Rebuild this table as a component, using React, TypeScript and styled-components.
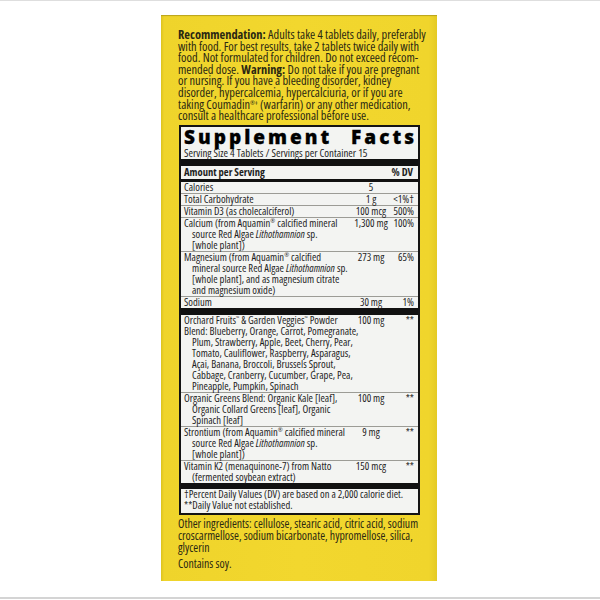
import React from "react";
import styled, { createGlobalStyle } from "styled-components";

const GlobalStyle = createGlobalStyle`
  html, body { margin: 0; padding: 0; background: #ffffff; }
  body { font-family: "Open Sans", "Liberation Sans", sans-serif; }
  * { box-sizing: border-box; }
`;

const COND = `"Open Sans", "Liberation Sans", sans-serif`;

const Page = styled.div`
  width: 600px;
  height: 600px;
  border-top: 1px solid #dedede;
  padding-top: 14px;
  display: flex;
  flex-direction: column;
  align-items: center;
  background: #ffffff;
`;

const Panel = styled.div`
  width: 276px;
  height: 566px;
  margin-left: -2px;
  background: linear-gradient(90deg, #dcc21f 0px, #efd42b 3px, #f2d72e 50%, #f0d52c 97%, #e4ca24 100%);
  box-shadow: inset 0 2px 1px -1px #b9a21d;
  padding: 14px 17px 0 17px;
  display: flex;
  flex-direction: column;
  color: #2a2812;
  font-family: ${COND};
  font-stretch: 75%;
`;

const Para = styled.p`
  margin: 0;
  font-size: 12.4px;
  line-height: 11.6px;
  white-space: nowrap;
`;

const Strong = styled.b`
  font-weight: 700;
`;

const Sup = styled.span<{ $s?: number }>`
  font-size: ${(p) => p.$s ?? 6}px;
  line-height: 0;
  vertical-align: baseline;
  position: relative;
  top: -4px;
`;

const FactsBox = styled.div`
  margin: 3px 0 0 1px;
  border: 2px solid #141414;
  background: #f3f4f2;
  padding: 0 4px 0 2px;
  color: #1e1e1e;
  font-size: 10.6px;
`;

const Title = styled.div`
  display: flex;
  justify-content: space-between;
  font-family: "Open Sans", "Liberation Sans", sans-serif;
  font-stretch: 100%;
  font-weight: 800;
  font-size: 19px;
  line-height: 20px;
  letter-spacing: 3px;
  -webkit-text-stroke: 0.3px #000;
  color: #000;
  padding: 0 0 0 1px;
  span:last-child { margin-right: -3px; }
`;

const Serving = styled.div`
  font-size: 10.9px;
  line-height: 11px;
  padding: 0 0 1px 1px;
  white-space: nowrap;
`;

const Bar = styled.div<{ $h: number }>`
  height: ${(p) => p.$h}px;
  background: #111;
  margin: 0 -4px 0 -2px;
`;

const HeadRow = styled.div`
  display: flex;
  justify-content: space-between;
  font-weight: 700;
  line-height: 13px;
  padding: 0 1px;
`;

const Row = styled.div<{ $last?: boolean }>`
  display: grid;
  grid-template-columns: minmax(0, 1fr) 40px 23px;
  line-height: 11px;
  border-bottom: ${(p) => (p.$last ? "none" : "1px solid #9c9c96")};
  margin: 0 -4px 0 -2px;
  padding: 0 4px 0 3px;
  white-space: nowrap;
`;

const Name = styled.div``;

const Amount = styled.div`
  text-align: center;
`;

const Dv = styled.div`
  text-align: right;
`;

const Cont = styled.div<{ $hang?: boolean }>`
  grid-column: 1 / -1;
  padding-left: 8px;
  text-indent: ${(p) => (p.$hang ? "-8px" : "0")};
`;

const Foot = styled.div`
  font-size: 10.6px;
  line-height: 11px;
  padding: 0 0 2px 1px;
  white-space: nowrap;
`;

const Other = styled.p`
  margin: 2px 0 0 0;
  font-size: 11.8px;
  line-height: 12px;
  white-space: nowrap;
`;

const Contains = styled.p`
  margin: 4px 0 0 0;
  font-size: 11.8px;
  line-height: 12px;
`;

const BottomLine = styled.div`
  width: 600px;
  height: 2px;
  margin-top: 16px;
  background: #d4d4d4;
`;

type R = {
  name: React.ReactNode;
  amount: string;
  dv: string;
  cont?: React.ReactNode[];
  hang?: boolean;
  last?: boolean;
};

const L = () => <i>Lithothamnion</i>;

const top: R[] = [
  { name: "Calories", amount: "5", dv: "" },
  { name: "Total Carbohydrate", amount: "1 g", dv: "<1%†" },
  { name: "Vitamin D3 (as cholecalciferol)", amount: "100 mcg", dv: "500%" },
  {
    name: <>Calcium (from Aquamin<Sup>®</Sup> calcified mineral</>,
    amount: "1,300 mg",
    dv: "100%",
    cont: [<>source Red Algae <L /> sp.</>, "[whole plant])"],
  },
  {
    name: <>Magnesium (from Aquamin<Sup>®</Sup> calcified</>,
    amount: "273 mg",
    dv: "65%",
    cont: [
      <>mineral source Red Algae <L /> sp.</>,
      "[whole plant], and as magnesium citrate",
      "and magnesium oxide)",
    ],
  },
  { name: "Sodium", amount: "30 mg", dv: "1%", last: true },
];

const bottom: R[] = [
  {
    name: <>Orchard Fruits<Sup $s={5}>™</Sup> &amp; Garden Veggies<Sup $s={5}>™</Sup> Powder</>,
    amount: "100 mg",
    dv: "**",
    hang: true,
    cont: [
      "Blend: Blueberry, Orange, Carrot, Pomegranate,",
      "Plum, Strawberry, Apple, Beet, Cherry, Pear,",
      "Tomato, Cauliflower, Raspberry, Asparagus,",
      "Açai, Banana, Broccoli, Brussels Sprout,",
      "Cabbage, Cranberry, Cucumber, Grape, Pea,",
      "Pineapple, Pumpkin, Spinach",
    ],
  },
  {
    name: "Organic Greens Blend: Organic Kale [leaf],",
    amount: "100 mg",
    dv: "**",
    cont: ["Organic Collard Greens [leaf], Organic", "Spinach [leaf]"],
  },
  {
    name: <>Strontium (from Aquamin<Sup>®</Sup> calcified mineral</>,
    amount: "9 mg",
    dv: "**",
    cont: [<>source Red Algae <L /> sp.</>, "[whole plant])"],
  },
  {
    name: "Vitamin K2 (menaquinone-7) from Natto",
    amount: "150 mcg",
    dv: "**",
    cont: ["(fermented soybean extract)"],
    last: true,
  },
];

const renderRow = (r: R, i: number) => (
  <Row key={i} $last={r.last}>
    <Name>{r.name}</Name>
    <Amount>{r.amount}</Amount>
    <Dv>{r.dv}</Dv>
    {r.cont && (
      <Cont $hang={r.hang}>
        {r.cont.map((c, j) => (
          <React.Fragment key={j}>
            {j > 0 && <br />}
            {c}
          </React.Fragment>
        ))}
      </Cont>
    )}
  </Row>
);

export default function App() {
  return (
    <>
      <GlobalStyle />
      <Page>
        <Panel>
          <Para>
            <Strong>Recommendation:</Strong> Adults take 4 tablets daily, preferably
            <br />
            with food. For best results, take 2 tablets twice daily with
            <br />
            food. Not formulated for children. Do not exceed recom-
            <br />
            mended dose. <Strong>Warning:</Strong> Do not take if you are pregnant
            <br />
            or nursing. If you have a bleeding disorder, kidney
            <br />
            disorder, hypercalcemia, hypercalciuria, or if you are
            <br />
            taking Coumadin<Sup>®‡</Sup> (warfarin) or any other medication,
            <br />
            consult a healthcare professional before use.
          </Para>
          <FactsBox>
            <Title>
              <span>Supplement</span>
              <span>Facts</span>
            </Title>
            <Serving>Serving Size 4 Tablets / Servings per Container 15</Serving>
            <Bar $h={7} />
            <HeadRow>
              <span>Amount per Serving</span>
              <span>% DV</span>
            </HeadRow>
            <Bar $h={3} />
            {top.map(renderRow)}
            <Bar $h={7} />
            {bottom.map(renderRow)}
            <Bar $h={6} />
            <Foot>
              †Percent Daily Values (DV) are based on a 2,000 calorie diet.
              <br />
              **Daily Value not established.
            </Foot>
          </FactsBox>
          <Other>
            Other ingredients: cellulose, stearic acid, citric acid, sodium
            <br />
            croscarmellose, sodium bicarbonate, hypromellose, silica,
            <br />
            glycerin
          </Other>
          <Contains>Contains soy.</Contains>
        </Panel>
        <BottomLine />
      </Page>
    </>
  );
}
